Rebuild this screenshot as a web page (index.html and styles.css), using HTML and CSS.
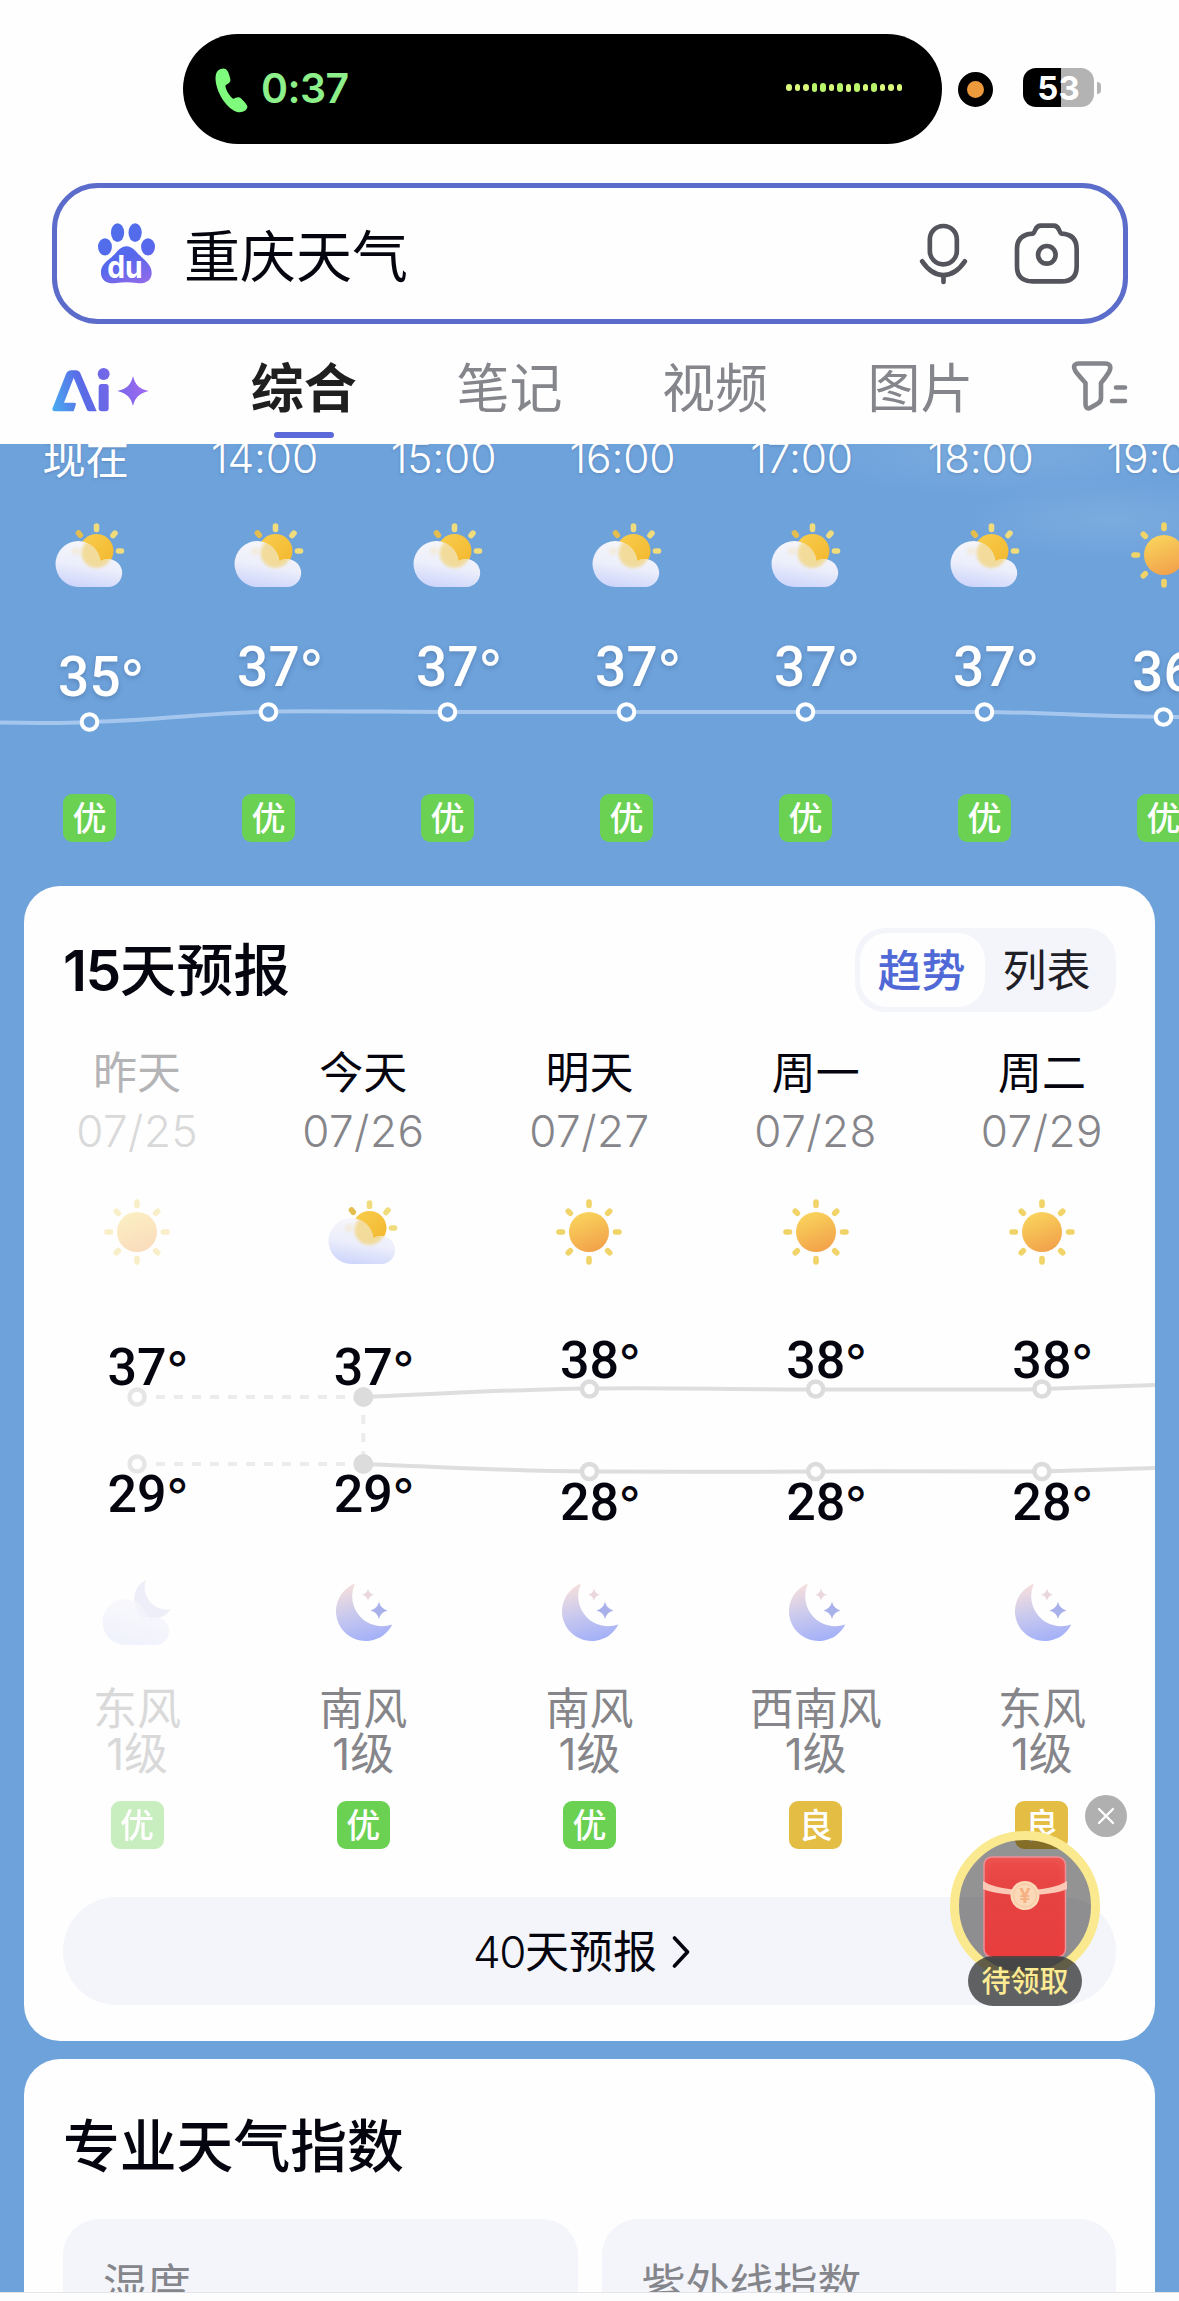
FILE: index.html
```html
<!DOCTYPE html>
<html lang="zh-CN">
<head>
<meta charset="utf-8">
<title>重庆天气</title>
<link rel="stylesheet" href="styles.css">
</head>
<body>
<svg class="defs" aria-hidden="true">
  <defs>
    <linearGradient id="sunFill" x1="0.3" y1="0" x2="0.7" y2="1"><stop offset="0" stop-color="#f9d45c"/><stop offset="1" stop-color="#f2a04a"/></linearGradient>
    <linearGradient id="sunSmall" x1="0" y1="0" x2="1" y2="1"><stop offset="0" stop-color="#f8ce4e"/><stop offset="1" stop-color="#f3b62c"/></linearGradient>
    <linearGradient id="cloudFill" x1="0.6" y1="0" x2="0.35" y2="1"><stop offset="0" stop-color="#f7f7fb"/><stop offset="0.55" stop-color="#eceefb"/><stop offset="1" stop-color="#cdd5fb"/></linearGradient>
    <linearGradient id="moonFill" x1="0.3" y1="0" x2="0.55" y2="1"><stop offset="0" stop-color="#f6dfdc"/><stop offset="0.5" stop-color="#c9c9ee"/><stop offset="1" stop-color="#a4b1f8"/></linearGradient>
    <linearGradient id="cloudMoonFill" x1="0.7" y1="0" x2="0.35" y2="1"><stop offset="0" stop-color="#f4f4fb"/><stop offset="1" stop-color="#d9defb"/></linearGradient>
    <linearGradient id="redFill" x1="0" y1="0" x2="0" y2="1"><stop offset="0" stop-color="#ee5450"/><stop offset="0.4" stop-color="#e84444"/><stop offset="1" stop-color="#ea3d3d"/></linearGradient>
    <clipPath id="cloudClip"><path d="M24.500 22A23 23 0 0 1 46.500 42.300A14 14 0 1 1 53.500 68H24.500A23 23 0 0 1 24.500 22Z"/></clipPath>
    <filter id="soft" x="-30%" y="-30%" width="160%" height="160%"><feGaussianBlur stdDeviation="1.600"/></filter>
    <symbol id="sun" viewBox="0 0 72 72">
      <g stroke="#f0d468" stroke-width="5.600" stroke-linecap="round">
        <path d="M36 6v3.500M36 62.500v3.500M6 36h3.500M62.500 36h3.500M15.300 15.300l2 2M54.700 54.700l2 2M15.300 56.700l2-2M54.700 17.300l2-2"/>
      </g>
      <circle cx="36" cy="36" r="20" fill="url(#sunFill)"/>
    </symbol>
    <symbol id="cloudy" viewBox="0 0 72 72">
      <g stroke="#f0dc7c" stroke-width="5.600" stroke-linecap="round">
        <path d="M42.500 7v3.500M64.500 32h3M59 16.500l2-2.400"/>
        <path d="M24.500 14l1.800 2.300" stroke="#e3bd4e"/>
      </g>
      <circle cx="42.500" cy="32" r="17" fill="url(#sunSmall)"/>
      <path d="M24.500 22A23 23 0 0 1 46.500 42.300A14 14 0 1 1 53.500 68H24.500A23 23 0 0 1 24.500 22Z" fill="url(#cloudFill)"/>
      <g clip-path="url(#cloudClip)"><circle cx="42.500" cy="34" r="15" fill="#f3d273" opacity=".7" filter="url(#soft)"/><circle cx="22" cy="32" r="4" fill="#f6dfa8" opacity=".35" filter="url(#soft)"/></g>
    </symbol>
    <symbol id="moon" viewBox="0 0 72 72">
      <path d="M28 6.600A29.700 29.700 0 1 0 65.300 47.500A30 30 0 0 1 28 6.600Z" fill="url(#moonFill)"/>
      <path d="M41 11.500q1 5.200 6 6.200q-5 1-6 6.200q-1-5.200-6-6.200q5-1 6-6.200z" fill="#ead6dd"/>
      <path d="M52 24.800q1.600 7 8.500 8.600q-6.900 1.600-8.500 8.600q-1.600-7-8.500-8.600q6.900-1.600 8.500-8.600z" fill="#a9b1ea"/>
    </symbol>
    <symbol id="cloudmoon" viewBox="0 0 72 72">
      <path d="M45 3A20 20 0 1 0 70 32A22 22 0 0 1 45 3Z" fill="#d3d3f0"/>
      <path d="M24.500 22A23 23 0 0 1 46.500 42.300A14 14 0 1 1 53.500 68H24.500A23 23 0 0 1 24.500 22Z" fill="url(#cloudMoonFill)"/>
      <g clip-path="url(#cloudClip)"><circle cx="48" cy="28" r="14" fill="#d6d6f0" opacity=".6" filter="url(#soft)"/></g>
    </symbol>
  </defs>
</svg>

<div class="page">
  <header class="top">
    <div class="status">
      <div class="island">
        <svg class="phone" viewBox="524 144 99 137"><path fill="#7ffb7d" d="M545 146C530 148 524 160 525 180C527 215 555 265 588 277C605 282 620 275 622 262C622 256 610 244 602 236C594 230 586 236 579 238C568 230 556 212 555 197C562 192 572 188 570 178C568 168 565 159 561 152Q555 144 545 146Z"/></svg>
        <span class="call-time">0:37</span>
        <span class="wave"><i></i><i></i><i></i><i class="t"></i><i class="t"></i><i></i><i class="t"></i><i class="m"></i><i class="t"></i><i></i><i class="t"></i><i></i><i></i><i></i></span>
      </div>
      <span class="mic-dot"></span>
      <span class="battery">53</span><span class="nub"></span>
    </div>

    <div class="search">
      <svg class="paw" viewBox="174 611 172 182">
        <defs><linearGradient id="pawFill" gradientUnits="userSpaceOnUse" x1="230" y1="620" x2="310" y2="790"><stop offset="0" stop-color="#4f6fea"/><stop offset="0.550" stop-color="#5767ec"/><stop offset="1" stop-color="#8f6bea"/></linearGradient></defs>
        <g fill="url(#pawFill)"><ellipse cx="233" cy="639" rx="20" ry="28"/><ellipse cx="286" cy="639" rx="20" ry="28"/><ellipse cx="195" cy="682" rx="21" ry="26"/><ellipse cx="325" cy="682" rx="21" ry="26"/>
        <path d="M260 680C240 680 230 700 215 713C195 728 182 740 183 762C184 785 205 795 230 791C250 788 270 788 290 791C315 795 336 785 336 760C336 740 322 728 306 713C290 700 280 680 260 680Z"/></g>
        <text class="du" x="202" y="777" textLength="107" lengthAdjust="spacingAndGlyphs">du</text>
      </svg>
      <span class="query">重庆天气</span>
      <svg class="mic" viewBox="477 612 146 186" fill="none" stroke="#54555c" stroke-width="14" stroke-linecap="round"><rect x="509" y="621" width="81" height="115" rx="40"/><path d="M486 727C505 755 528 768 550 768C572 768 595 755 614 727M550 769v20"/></svg>
      <svg class="camera" viewBox="763 609 197 184" fill="none" stroke="#54555c" stroke-width="14" stroke-linejoin="round"><path d="M819 641Q823 638 826 630Q831 617 843 617H881Q893 617 898 630Q901 638 905 641Q951 643 951 688V740Q951 785 905 785H818Q771 785 771 740V688Q771 643 819 641Z"/><circle cx="861" cy="705" r="26.500"/></svg>
    </div>

    <nav class="tabs">
      <svg class="ai" viewBox="66 83 291 132">
        <defs><linearGradient id="aiFill" gradientUnits="userSpaceOnUse" x1="67" y1="200" x2="350" y2="130"><stop offset="0" stop-color="#49aaf0"/><stop offset="0.350" stop-color="#5a6ae6"/><stop offset="0.700" stop-color="#7a66e8"/><stop offset="1" stop-color="#a06af2"/></linearGradient></defs>
        <g fill="url(#aiFill)"><path d="M75 213Q64 213 68 203L108 101Q113 90 124 90H137Q148 90 152 101L200 213H178Q172 213 170 207L131 112L102 187H132Q140 187 137 195L131 213Z"/><circle cx="221" cy="101" r="18"/><rect x="206" y="131" width="30" height="82" rx="9"/><path d="M309 107C316 134 326 145 356 152C326 160 316 171 309 197C302 171 292 160 262 152C292 145 302 134 309 107Z"/></g>
      </svg>
      <a class="tab active">综合</a><a class="tab">笔记</a><a class="tab">视频</a><a class="tab">图片</a>
      <svg class="filter" viewBox="1071 359 58 53" fill="none" stroke="#85868c" stroke-width="4.600" stroke-linecap="round" stroke-linejoin="round"><path d="M1080 363.500H1106Q1114 364 1110 372Q1107 377 1102 383V398Q1102 402 1098 404L1091 408Q1086.500 409.500 1086.500 404V383Q1081 377 1077 372Q1072 364 1080 363.500ZM1117 387.500h9M1113 401h13"/></svg>
    </nav>
  </header>

  <main class="sky">
    <section class="hours">
      <svg class="hour-line" viewBox="0 0 1179 40" fill="none"><path d="M0 23.500C60 25 100 23 150 20C200 16 230 13.500 268.500 12.500S400 13 447 13H984.500C1050 13.500 1100 18 1179 18" stroke="#a5c7ee" stroke-width="4"/>
        <g stroke="#fff" stroke-width="4" fill="#6ea2db"><circle cx="89.500" cy="23" r="7.800"/><circle cx="268.500" cy="13" r="7.800"/><circle cx="447.500" cy="13" r="7.800"/><circle cx="626.500" cy="13" r="7.800"/><circle cx="805.500" cy="13" r="7.800"/><circle cx="984.500" cy="13" r="7.800"/><circle cx="1163.500" cy="18" r="7.800"/></g></svg>
      <div class="hour now"><span class="time">现在</span><svg class="wi"><use href="#cloudy"/></svg><span class="temp">35<sup>°</sup></span><span class="aqi">优</span></div>
      <div class="hour"><span class="time">14:00</span><svg class="wi"><use href="#cloudy"/></svg><span class="temp">37<sup>°</sup></span><span class="aqi">优</span></div>
      <div class="hour"><span class="time">15:00</span><svg class="wi"><use href="#cloudy"/></svg><span class="temp">37<sup>°</sup></span><span class="aqi">优</span></div>
      <div class="hour"><span class="time">16:00</span><svg class="wi"><use href="#cloudy"/></svg><span class="temp">37<sup>°</sup></span><span class="aqi">优</span></div>
      <div class="hour"><span class="time">17:00</span><svg class="wi"><use href="#cloudy"/></svg><span class="temp">37<sup>°</sup></span><span class="aqi">优</span></div>
      <div class="hour"><span class="time">18:00</span><svg class="wi"><use href="#cloudy"/></svg><span class="temp">37<sup>°</sup></span><span class="aqi">优</span></div>
      <div class="hour later"><span class="time">19:00</span><svg class="wi"><use href="#sun"/></svg><span class="temp">36<sup>°</sup></span><span class="aqi">优</span></div>
    </section>

    <section class="card forecast">
      <div class="card-head"><h2><span class="count">15</span>天预报</h2><div class="toggle"><span class="on">趋势</span><span class="off">列表</span></div></div>
      <div class="days">
        <svg class="trend" viewBox="0 0 1131 110" fill="none">
          <g stroke="#ececec" stroke-width="4" stroke-dasharray="9 9"><path d="M132 21H330M132 88H330M339.300 39V80"/></g>
          <g stroke="#dedede" stroke-width="4"><path d="M339.300 21C420 18 480 13.500 565.500 12.500S700 13.500 791.700 13.500S1000 14 1018 13L1131 9"/><path d="M339.300 88C420 91 480 95 565.500 95.500S700 96 791.700 95.500S1000 96 1018 95.500L1131 92"/></g>
          <g stroke="#e6e6e6" stroke-width="4.500" fill="#fff"><circle cx="113.100" cy="21" r="7.500"/><circle cx="113.100" cy="88" r="7.500"/></g>
          <g fill="#dcdcdc"><circle cx="339.300" cy="21" r="10"/><circle cx="339.300" cy="88" r="10"/></g>
          <g stroke="#dcdcdc" stroke-width="4.500" fill="#fff"><circle cx="565.500" cy="13" r="7.500"/><circle cx="791.700" cy="13" r="7.500"/><circle cx="1017.900" cy="13" r="7.500"/><circle cx="565.500" cy="95.500" r="7.500"/><circle cx="791.700" cy="95.500" r="7.500"/><circle cx="1017.900" cy="95.500" r="7.500"/></g>
        </svg>
        <div class="day past"><span class="name">昨天</span><span class="date">07/25</span><svg class="wi"><use href="#sun"/></svg><div class="range"><span>37<sup>°</sup></span><span>29<sup>°</sup></span></div><svg class="wi"><use href="#cloudmoon"/></svg><span class="wind">东风<br>1级</span><span class="aqi">优</span></div>
        <div class="day"><span class="name">今天</span><span class="date">07/26</span><svg class="wi"><use href="#cloudy"/></svg><div class="range"><span>37<sup>°</sup></span><span>29<sup>°</sup></span></div><svg class="wi"><use href="#moon"/></svg><span class="wind">南风<br>1级</span><span class="aqi">优</span></div>
        <div class="day"><span class="name">明天</span><span class="date">07/27</span><svg class="wi"><use href="#sun"/></svg><div class="range wide"><span>38<sup>°</sup></span><span>28<sup>°</sup></span></div><svg class="wi"><use href="#moon"/></svg><span class="wind">南风<br>1级</span><span class="aqi">优</span></div>
        <div class="day"><span class="name">周一</span><span class="date">07/28</span><svg class="wi"><use href="#sun"/></svg><div class="range wide"><span>38<sup>°</sup></span><span>28<sup>°</sup></span></div><svg class="wi"><use href="#moon"/></svg><span class="wind">西南风<br>1级</span><span class="aqi fair">良</span></div>
        <div class="day"><span class="name">周二</span><span class="date">07/29</span><svg class="wi"><use href="#sun"/></svg><div class="range wide"><span>38<sup>°</sup></span><span>28<sup>°</sup></span></div><svg class="wi"><use href="#moon"/></svg><span class="wind">东风<br>1级</span><span class="aqi fair">良</span></div>
      </div>
      <a class="more"><span><span class="forty">40</span>天预报</span><svg viewBox="0 0 18 34" fill="none" stroke="#05050f" stroke-width="3.600" stroke-linecap="round" stroke-linejoin="round"><path d="M2.500 3L15.500 17L2.500 31"/></svg></a>

      <div class="reward">
        <svg viewBox="0 0 150 150"><circle cx="75" cy="75" r="70.500" fill="rgba(0,0,0,.42)" stroke="#fae98e" stroke-width="9"/>
          <rect x="34" y="26" width="81.500" height="100" rx="8" fill="url(#redFill)" stroke="#f08f96" stroke-width="1.500"/><rect x="39" y="31" width="71" height="90" rx="8" fill="#e53f3f" opacity=".4" filter="url(#soft)"/>
          <path d="M33 50C50 62 100 62 117 50V58C100 66 50 66 33 58Z" fill="#fbc9b5"/>
          <circle cx="75" cy="64.500" r="14.500" fill="#fbd9b8"/><circle cx="75" cy="64.500" r="11.500" fill="none" stroke="#f6c79c"/><text class="yen" x="75" y="72" text-anchor="middle">¥</text></svg>
        <span class="claim">待领取</span>
      </div>
      <svg class="close" viewBox="0 0 42 42"><circle cx="21" cy="21" r="21" fill="#b0b0b0"/><path d="M14 14l14 14M28 14l-14 14" stroke="#fff" stroke-width="2.400" stroke-linecap="round"/></svg>
    </section>

    <section class="card indices">
      <h2>专业天气指数</h2>
      <div class="tiles"><div class="tile">湿度</div><div class="tile">紫外线指数</div></div>
    </section>
  </main>
  <footer class="bottom"></footer>
</div>
</body>
</html>
```
FILE: styles.css
```css
* { box-sizing: border-box; }
body { margin: 0; background: #fff; font-family: Inter, "Noto Sans CJK SC", sans-serif; color: #05050f; }
svg { display: block; flex: none; }
.defs { position: absolute; width: 0; height: 0; }
.page { width: 1179px; height: 2301px; overflow: hidden; display: flex; flex-direction: column; }

/* status bar, search, tabs */
.top { height: 444px; flex: none; background: #fefefe; }
.status { display: flex; align-items: center; padding: 34px 0 0 183px; }
.island { width: 759px; height: 110px; border-radius: 55px; background: #000; display: flex; align-items: center; padding: 0 40px 2px 32px; }
.phone { width: 33px; height: 45px; margin-top: 4px; }
.call-time { margin-left: 13px; font-size: 41px; font-weight: 600; line-height: 50px; color: #8df08b; letter-spacing: -.6px; }
.wave { margin: -1px 0 0 auto; display: flex; align-items: center; gap: 3.1px; }
.wave i { width: 5.4px; height: 6.5px; border-radius: 3px; background: #d9f77a; }
.wave .t { height: 9px; background: #b9f56a; }
.wave .m { height: 8px; }
.mic-dot { width: 35px; height: 35px; margin-left: 16px; border-radius: 50%; background: #ed9a3c; border: 9.500px solid #000; }
.battery { width: 71px; height: 39px; margin: -3px 0 0 30px; border-radius: 13px; background: linear-gradient(90deg, #000 38px, #b3b3b3 38px); color: #fff; font-size: 33px; font-weight: 700; line-height: 41px; text-align: center; }
.nub { width: 4px; height: 12px; margin: -3px 0 0 3px; border-radius: 0 6px 6px 0; background: #b3b3b3; }

.search { margin: 39px 51px 0 52px; height: 141px; border: 5px solid #5b6cca; border-radius: 46px; display: flex; align-items: center; padding: 0 43px 0 41px; }
.paw { width: 57px; height: 61px; }
.du { font-size: 94px; font-weight: 700; fill: #fff; }
.query { margin: 6px auto 0 29px; font-size: 56px; line-height: 70px; }
.mic { width: 49px; height: 62px; }
.camera { width: 66px; height: 61px; margin-left: 46px; }

.tabs { height: 120px; display: flex; padding: 0 50px 0 52px; align-items: flex-start; }
.ai { width: 97px; height: 44px; margin: 44px 52px 0 0; }
.tab { width: 205.600px; height: 114px; display: flex; flex-direction: column; align-items: center; padding-top: 31px; font-size: 53px; line-height: 68px; color: #85868c; font-weight: 400; }
.active { color: #1f1f1f; font-weight: 700; }
.active::after { content: ""; width: 60px; height: 6px; margin-top: 9px; border-radius: 3px; background: #5b6ad8; }
.filter { width: 58px; height: 53px; margin: 35px 0 0 47px; }

/* weather body */
.sky { flex: 1; min-height: 0; overflow: hidden; background: radial-gradient(ellipse 150px 40px at 1110px 75px, rgba(140,184,228,.45), transparent), radial-gradient(ellipse 210px 45px at 1000px 8px, rgba(140,184,228,.4), transparent), #6ea2db; }
.hours { position: relative; display: flex; height: 442px; width: 1253px; }
.hour { position: relative; width: 179px; margin-top: -16px; display: flex; flex-direction: column; align-items: center; }
.time { margin-right: 8px; font-size: 42.500px; line-height: 60px; color: #fff; font-weight: 350; text-shadow: 0 1px 3px rgba(50,80,120,.3); letter-spacing: -.2px; }
.wi { width: 72px; height: 72px; }
.hour .wi { margin-top: 31px; }
.temp { margin-top: 48px; height: 56px; font: 500 55px/56px Roboto, Inter, sans-serif; letter-spacing: .2px; color: #fff; text-shadow: 0 2px 5px rgba(50,80,120,.35); }
.now .temp { margin-top: 58px; margin-bottom: -10px; }
.later .temp { margin-top: 53px; margin-bottom: -5px; }
.now .time { font-size: 43.500px; font-weight: 400; }
sup { display: inline-block; width: 0; vertical-align: baseline; line-height: 1; font-family: Inter, sans-serif; font-weight: 400; font-size: 50px; }
.aqi { width: 53px; height: 48px; border-radius: 9px; background: #6bd152; color: #fff; font-size: 34px; line-height: 49px; font-weight: 500; text-align: center; }
.hour .aqi { margin-top: 99px; }
.hour-line { position: absolute; left: 0; top: 255px; width: 1179px; height: 40px; }

.card { margin: 0 24px; width: 1131px; border-radius: 36px; background: #fefefe; }
h2 { margin: 0; font-size: 56.800px; line-height: 80px; font-weight: 500; }
.count { letter-spacing: -1.500px; font-weight: 600; }
.forecast { position: relative; height: 1155px; padding-top: 42px; }
.card-head { height: 84px; padding: 2px 39px 0; display: flex; justify-content: space-between; align-items: center; }
.toggle { display: flex; width: 261px; height: 84px; margin-top: -2px; padding: 5px; border-radius: 30px; background: #f4f5fa; font-size: 44px; line-height: 76px; text-align: center; }
.on { width: 125px; border-radius: 27px; background: #fefefe; color: #5069d6; font-weight: 500; padding-right: 2px; }
.off { flex: 1; color: #1f1f28; padding-right: 3px; }
.days { position: relative; display: grid; grid-template-columns: repeat(5, 1fr); }
.trend { position: absolute; left: 0; top: 364px; width: 1131px; height: 110px; }
.day { position: relative; display: flex; flex-direction: column; align-items: center; padding-top: 37px; }
.name { font-size: 44px; line-height: 48px; }
.date { margin: 10px 0 41px; font-size: 44px; line-height: 48px; font-weight: 350; letter-spacing: .5px; color: #85858a; }
.range { height: 309px; padding-top: 74px; display: flex; flex-direction: column; gap: 75px; font: 500 52px/52px Roboto, Inter, sans-serif; }
.wide { padding-top: 67px; gap: 90px; }
.range sup { font-size: 47px; }
.wind { margin-top: 38px; font-size: 44px; line-height: 45px; font-weight: 400; color: #85858a; text-align: center; }
.day .aqi { margin-top: 24px; }
.fair { background: #e3bd44; }
.past .wi, .past .aqi { opacity: .36; }
.past .name { color: #b4b4b6; }
.past .date, .past .wind { color: #d9d9da; }
.more { margin: 48px 39px 0; height: 108px; border-radius: 54px; background: #f4f5fa; display: flex; align-items: center; justify-content: center; gap: 15px; font-size: 44px; line-height: 54px; padding: 2px 16px 0 0; }
.forty { font-weight: 350; letter-spacing: -1.500px; }
.more svg { width: 18px; height: 34px; }

.reward { position: absolute; left: 926px; top: 945px; width: 150px; }
.yen { font-size: 20px; font-weight: 700; fill: #f5b183; }
.claim { position: absolute; left: 18px; top: 125px; width: 114px; height: 50px; border-radius: 25px; background: rgba(45,45,45,.74); color: #fdeb93; font-size: 29px; line-height: 51px; font-weight: 500; text-align: center; }
.close { position: absolute; left: 1061px; top: 909px; width: 42px; height: 42px; }

.indices { margin-top: 18px; height: 400px; padding: 48px 39px 0; }
.tiles { display: grid; grid-template-columns: 1fr 1fr; gap: 24px; margin-top: 32px; }
.tile { height: 220px; border-radius: 36px; background: #f4f5fa; padding: 41px 40px; font-size: 44px; line-height: 50px; color: #85868c; }
.bottom { flex: none; height: 9px; background: #fdfdfd; border-top: 1px solid #e4e4e6; }
```
